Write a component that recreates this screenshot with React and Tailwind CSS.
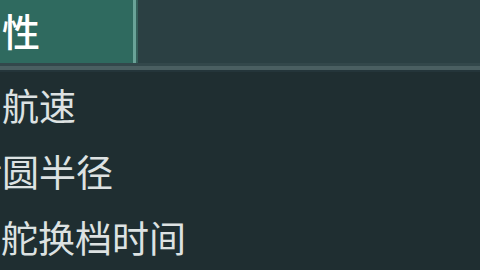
import React from 'react';

const rows = [
    { label: '航速', offset: 'ml-[2px]' },
    { label: '回转圆半径', offset: 'ml-[-72px]' },
    { label: '舵换档时间', offset: 'ml-[1px]' },
];

const App = () => {
    return (
        <div
            className="w-[480px] h-[270px] overflow-hidden flex flex-col bg-[#1f2e31]"
            style={{ fontFamily: '"Noto Sans CJK SC", "Noto Sans", sans-serif' }}
        >
            {/* header */}
            <div className="flex h-[63px] bg-[#2b4043] shrink-0">
                <div className="w-[136px] flex items-center overflow-hidden bg-[#2f6a5f] border-r-[3px] border-r-[#6aa398]">
                    <span className="ml-[-36px] mt-[-3px] text-[38px] leading-none font-medium text-white whitespace-nowrap">
                        属性
                    </span>
                </div>
                <div className="w-[2px] bg-[#35605a]" />
                <div className="flex-1" />
            </div>

            {/* separator */}
            <div className="h-[3px] bg-[#33484b] shrink-0" />
            <div className="h-[4px] bg-[#4a5f61] shrink-0" />
            <div className="h-[2px] bg-[#24353a] shrink-0" />

            {/* rows */}
            <div className="flex flex-col">
                {rows.map((row) => (
                    <div key={row.label} className="h-[66px] flex items-center overflow-hidden">
                        <span className={`${row.offset} text-[37px] leading-none text-[#dde2e2] whitespace-nowrap`}>
                            {row.label}
                        </span>
                    </div>
                ))}
            </div>
        </div>
    );
};

export default App;
